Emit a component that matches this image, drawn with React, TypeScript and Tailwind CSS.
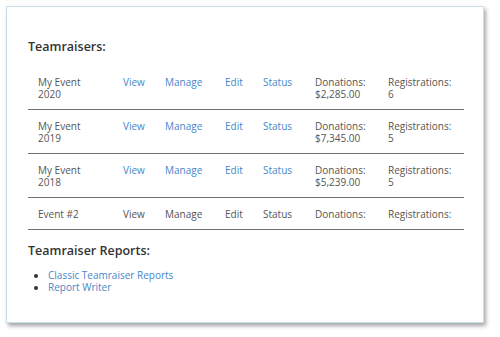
import React from "react";

type Event = {
  name: string[];
  donations?: string;
  registrations?: string;
  active: boolean;
};

const events: Event[] = [
  { name: ["My Event", "2020"], donations: "$2,285.00", registrations: "6", active: true },
  { name: ["My Event", "2019"], donations: "$7,345.00", registrations: "5", active: true },
  { name: ["My Event", "2018"], donations: "$5,239.00", registrations: "5", active: true },
  { name: ["Event #2"], active: false },
];

export default function App() {
  return (
    <div className="h-[337px] w-[500px] bg-white pl-[6px] pt-[6px] font-['Open_Sans',sans-serif]">
      <div className="h-[317px] w-[478px] border-[1.5px] border-[#c4e2e5] bg-white pl-[21px] pr-[20px] pt-[32px] shadow-[2px_3px_4px_rgba(0,0,0,0.35)]">
        <h2 className="text-[12.5px] font-semibold leading-4 text-[#333]">Teamraisers:</h2>

        <div className="mt-[11px] w-[436px]">
          {events.map((event, i) => {
            const link = event.active ? "text-[#4a86c8]" : "text-[#555]";
            return (
              <div
                key={i}
                className="grid grid-cols-[85px_42px_60px_38px_52px_73px_1fr] border-b border-[#707070] pb-[9px] pl-[10px] pt-[10px] text-[10px] leading-[12px] text-[#555]"
              >
                <div>
                  {event.name.map((line) => (
                    <div key={line}>{line}</div>
                  ))}
                </div>
                <div className={link}>View</div>
                <div className={link}>Manage</div>
                <div className={link}>Edit</div>
                <div className={link}>Status</div>
                <div>
                  <div>Donations:</div>
                  {event.donations ? <div>{event.donations}</div> : null}
                </div>
                <div>
                  <div>Registrations:</div>
                  {event.registrations ? <div>{event.registrations}</div> : null}
                </div>
              </div>
            );
          })}
        </div>

        <h2 className="mt-[13px] text-[12.5px] font-semibold leading-4 text-[#333]">Teamraiser Reports:</h2>

        <ul className="mt-[10px] list-disc pl-[20px] text-[10px] leading-[12px] text-[#4a86c8] marker:text-[#333]">
          <li>Classic Teamraiser Reports</li>
          <li>Report Writer</li>
        </ul>
      </div>
    </div>
  );
}
